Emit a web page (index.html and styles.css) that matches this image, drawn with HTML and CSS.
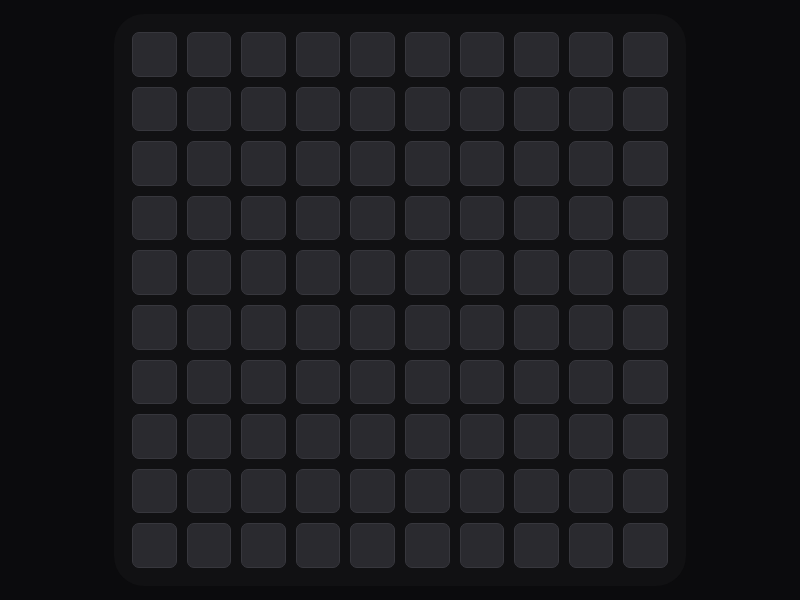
FILE: index.html
```html
<!DOCTYPE html>
<html>
<head>
<meta charset="utf-8">
<link rel="stylesheet" href="styles.css">
</head>
<body>
<div class="stage">
  <div class="board" id="board"></div>
</div>
<script>
  var b = document.getElementById('board');
  for (var i = 0; i < 100; i++) {
    var c = document.createElement('div');
    c.className = 'cell';
    b.appendChild(c);
  }
</script>
</body>
</html>
```

FILE: styles.css
```css
html, body {
  margin: 0;
  padding: 0;
  background: #0b0b0d;
  font-family: "Inter", sans-serif;
}
.stage {
  width: 800px;
  height: 600px;
  display: flex;
  align-items: center;
  justify-content: center;
}
.board {
  box-sizing: border-box;
  width: 572px;
  height: 572px;
  padding: 18px;
  background: #111113;
  border-radius: 30px;
  display: grid;
  grid-template-columns: repeat(10, 1fr);
  grid-template-rows: repeat(10, 1fr);
  gap: 10px;
}
.cell {
  box-sizing: border-box;
  background: #2a2a2f;
  border: 1px solid #37373d;
  border-radius: 7px;
}
```
